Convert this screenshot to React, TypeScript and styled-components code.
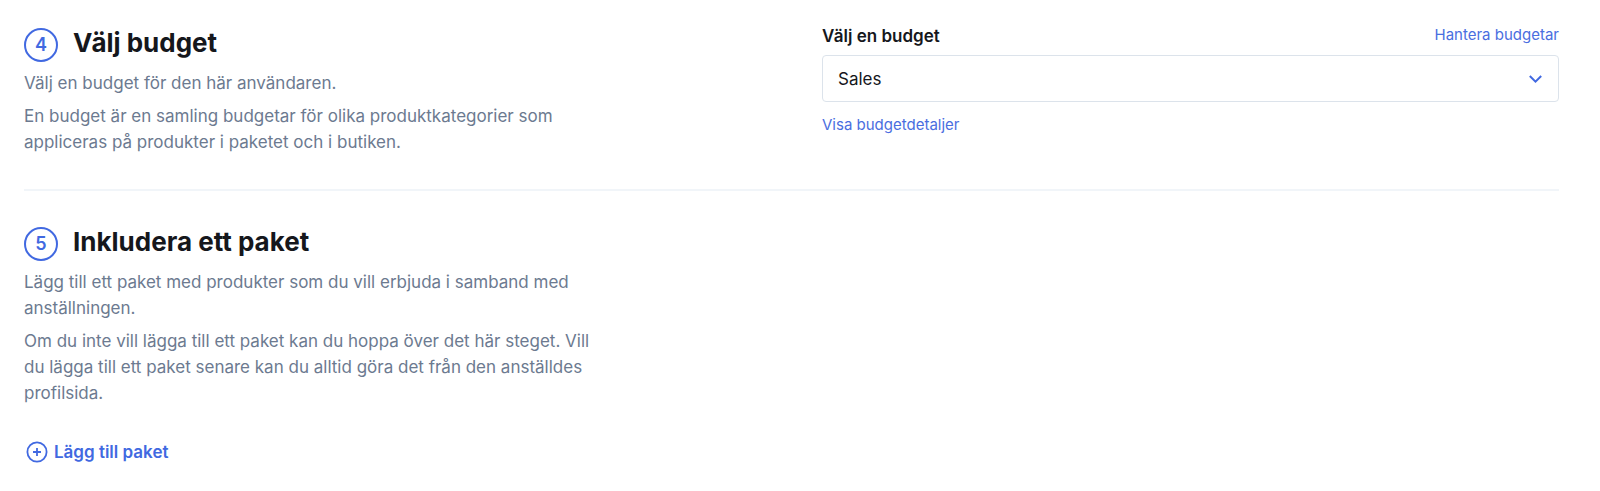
import React from "react";
import styled, { createGlobalStyle } from "styled-components";

const Global = createGlobalStyle`
  * { box-sizing: border-box; }
  body {
    margin: 0;
    background: #fff;
    color: #15171c;
    font-family: Inter, "Liberation Sans", sans-serif;
  }
`;

const Page = styled.main`
  padding: 24px 41px 24px 24px;
`;

const Step = styled.section`
  display: grid;
  grid-template-columns: minmax(0, 1fr) minmax(0, 1fr);
  column-gap: 61px;
  padding-bottom: 27px;
  & + & {
    border-top: 2px solid #f1f5f9;
    padding-top: 32px;
    padding-bottom: 0;
  }
`;

const Intro = styled.div`
  max-width: 580px;
`;

const Heading = styled.header`
  display: flex;
  align-items: center;
  gap: 15px;
  height: 41px;
  margin-bottom: 5px;
`;

const StepNumber = styled.span`
  display: flex;
  align-items: center;
  justify-content: center;
  width: 34px;
  height: 34px;
  border: 2px solid #4169e1;
  border-radius: 50%;
  color: #4169e1;
  font-size: 18px;
  font-weight: 600;
`;

const Title = styled.h2`
  margin: 0 0 3px;
  font-size: 26px;
  line-height: 36px;
  font-weight: 700;
`;

const Text = styled.p`
  margin: 0 0 7px;
  color: #6c7a90;
  font-size: 17px;
  line-height: 26px;
`;

const FieldHead = styled.div`
  display: flex;
  justify-content: space-between;
  align-items: flex-start;
  height: 24px;
  margin-bottom: 7px;
`;

const Label = styled.label`
  font-size: 17px;
  line-height: 24px;
  font-weight: 600;
`;

const Link = styled.a`
  color: #4a6ee0;
  font-size: 15px;
  line-height: 22px;
  text-decoration: none;
`;

const SelectWrap = styled.div`
  display: grid;
  align-items: center;
  margin-bottom: 12px;
  & > * { grid-area: 1 / 1; }
  & > svg { justify-self: end; margin-right: 17px; pointer-events: none; }
`;

const Select = styled.select`
  appearance: none;
  width: 100%;
  height: 47px;
  padding: 0 44px 0 15px;
  border: 1px solid #dce3eb;
  border-radius: 4px;
  background: #fff;
  color: #15171c;
  font: 400 17px Inter, "Liberation Sans", sans-serif;
`;

const AddButton = styled.button`
  display: flex;
  align-items: center;
  gap: 6px;
  margin-top: 34px;
  padding: 0 2px;
  border: 0;
  background: none;
  color: #4169e1;
  font: 600 17px/24px Inter, "Liberation Sans", sans-serif;
  cursor: pointer;
`;

export default function App() {
  return (
    <Page>
      <Global />
      <Step>
        <Intro>
          <Heading>
            <StepNumber>4</StepNumber>
            <Title>Välj budget</Title>
          </Heading>
          <Text>Välj en budget för den här användaren.</Text>
          <Text>
            En budget är en samling budgetar för olika produktkategorier som
            appliceras på produkter i paketet och i butiken.
          </Text>
        </Intro>
        <div>
          <FieldHead>
            <Label htmlFor="budget">Välj en budget</Label>
            <Link href="#budgetar">Hantera budgetar</Link>
          </FieldHead>
          <SelectWrap>
            <Select id="budget" defaultValue="sales">
              <option value="sales">Sales</option>
            </Select>
            <svg width="13" height="8" viewBox="0 0 13 8" fill="none" stroke="#4169e1" strokeWidth="2" aria-hidden="true">
              <path d="M0.8 1L6.5 6.6L12.2 1" />
            </svg>
          </SelectWrap>
          <Link href="#detaljer">Visa budgetdetaljer</Link>
        </div>
      </Step>
      <Step>
        <Intro>
          <Heading>
            <StepNumber>5</StepNumber>
            <Title>Inkludera ett paket</Title>
          </Heading>
          <Text>
            Lägg till ett paket med produkter som du vill erbjuda i samband med
            anställningen.
          </Text>
          <Text>
            Om du inte vill lägga till ett paket kan du hoppa över det här
            steget. Vill du lägga till ett paket senare kan du alltid göra det
            från den anställdes profilsida.
          </Text>
          <AddButton type="button">
            <svg width="22" height="22" viewBox="0 0 22 22" fill="none" stroke="currentColor" strokeWidth="1.8" aria-hidden="true">
              <circle cx="11" cy="11" r="9.6" />
              <path d="M11 7v8M7 11h8" />
            </svg>
            Lägg till paket
          </AddButton>
        </Intro>
      </Step>
    </Page>
  );
}
